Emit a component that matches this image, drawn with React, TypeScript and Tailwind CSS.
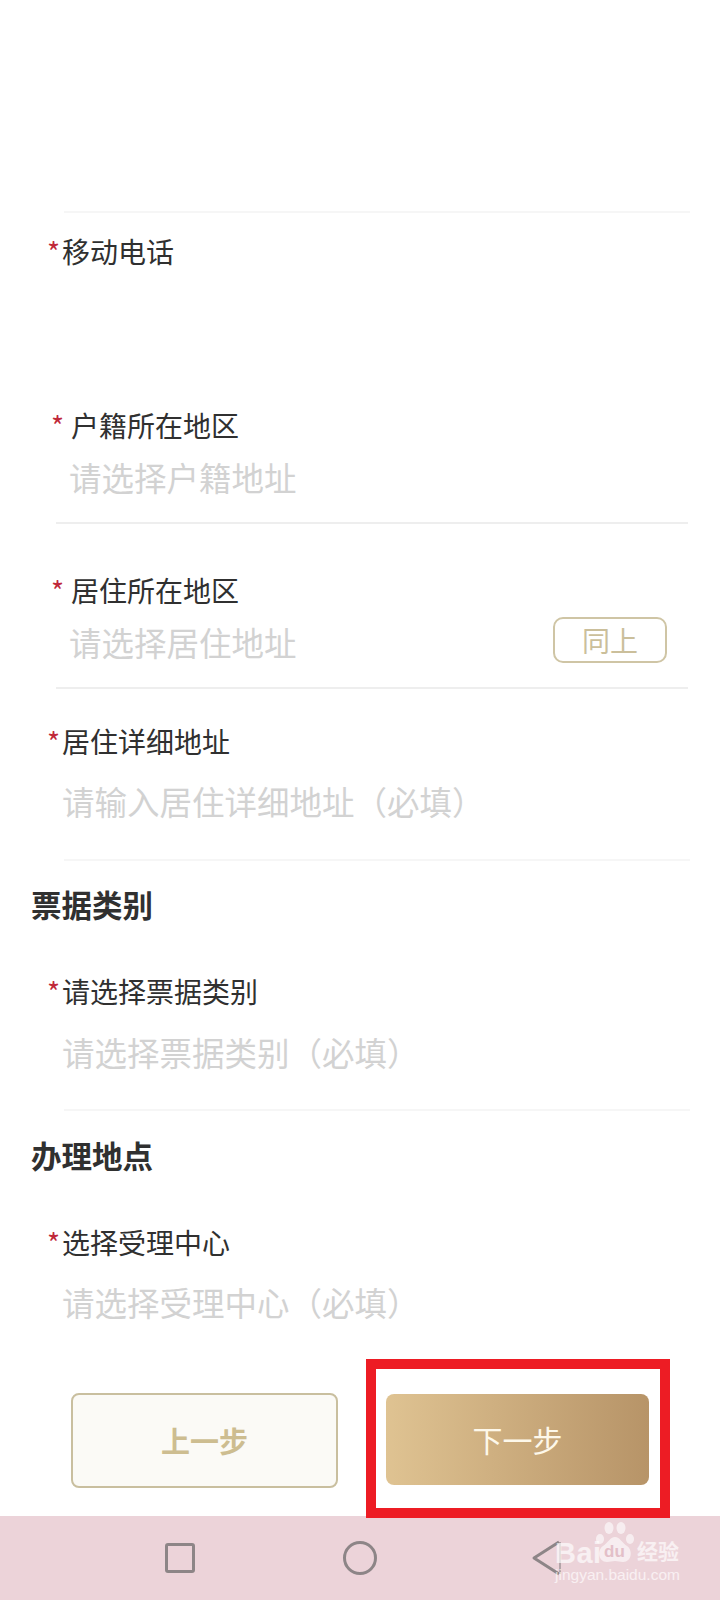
const font = { fontFamily: '"Noto Sans CJK SC", "Liberation Sans", sans-serif' }

type LabelProps = { text: string; spaced?: boolean; className?: string }

const Label = ({ text, spaced, className }: LabelProps) => (
  <div className={"flex items-center h-9 text-[28px] leading-9 text-[#303030] " + (spaced ? "pl-[51px]" : "pl-[47px]") + " " + (className ?? "")}>
    <span className={"text-[28px] text-[#c0283a] " + (spaced ? "w-[20px]" : "w-[15px]")}>*</span>
    <span>{text}</span>
  </div>
)

const Hint = ({ text, className }: { text: string; className?: string }) => (
  <div className={"h-10 text-[32.5px] leading-10 text-[#d2d2d2] whitespace-nowrap " + (className ?? "")}>{text}</div>
)

const Title = ({ text, className }: { text: string; className?: string }) => (
  <div className={"pl-[31px] h-10 text-[30.5px] leading-10 font-bold text-[#303030] " + (className ?? "")}>{text}</div>
)

const Watermark = () => (
  <div className="absolute left-[555px] top-[1522px] w-[128px] text-white/65" style={{ fontFamily: '"Liberation Sans", sans-serif' }}>
    <div className="flex items-end h-[41px]">
      <span className="w-[41px] text-[29px] leading-[20px] font-bold tracking-[0.5px]">Bai</span>
      <div className="relative w-[38px] h-[41px]">
        <svg width="38" height="41" viewBox="0 0 38 41" fill="#ffffff" fillOpacity="0.6">
          <ellipse cx="4" cy="17" rx="4" ry="5" />
          <ellipse cx="13" cy="6" rx="4.5" ry="6" />
          <ellipse cx="25" cy="6" rx="4.5" ry="6" />
          <ellipse cx="34" cy="17" rx="4" ry="5" />
          <path d="M19 15c-5 0-7 6-12 9-6 4-5 16 4 16 3 0 5-1 8-1s5 1 8 1c9 0 10-12 4-16-5-3-7-9-12-9z" />
        </svg>
        <span className="absolute left-[8px] bottom-[3px] text-[17px] leading-none font-bold text-[#e3bfc8]">du</span>
      </div>
      <span className="ml-[3px] text-[21px] leading-[26px] font-bold" style={font}>经验</span>
    </div>
    <div className="mt-[4px] text-[15.5px] leading-none whitespace-nowrap">jingyan.baidu.com</div>
  </div>
)

const App: React.FunctionComponent = () => {
  return (
    <div className="relative w-[720px] h-[1600px] bg-white overflow-hidden" style={font}>
      <div className="h-[211px]" />
      <div className="ml-16 mr-[30px] h-0.5 bg-[#f6f6f6]" />

      <Label text="移动电话" className="mt-[20px]" />
      <Label text="户籍所在地区" spaced className="mt-[138px]" />
      <Hint text="请选择户籍地址" className="mt-[14px] pl-[69px]" />
      <div className="mt-[25px] ml-14 mr-8 h-0.5 bg-[#eeeeee]" />

      <Label text="居住所在地区" spaced className="mt-[48px]" />
      <div className="mt-[9px] flex items-center justify-between pl-[69px] pr-[53px] h-[50px]">
        <Hint text="请选择居住地址" />
        <div className="flex items-center justify-center w-[114px] h-[46px] mb-[4px] rounded-[10px] border-2 border-[#cfc5a5] text-[28px] text-[#cbbf9b]">同上</div>
      </div>
      <div className="mt-[20px] ml-14 mr-8 h-0.5 bg-[#eeeeee]" />

      <Label text="居住详细地址" className="mt-[34px]" />
      <Hint text="请输入居住详细地址（必填）" className="mt-[22px] pl-[62px]" />
      <div className="mt-[38px] ml-16 mr-[30px] h-0.5 bg-[#f6f6f6]" />

      <Title text="票据类别" className="mt-[23px]" />
      <Label text="请选择票据类别" className="mt-[49px]" />
      <Hint text="请选择票据类别（必填）" className="mt-[23px] pl-[62px]" />
      <div className="mt-[37px] ml-16 mr-[30px] h-0.5 bg-[#f6f6f6]" />

      <Title text="办理地点" className="mt-[24px]" />
      <Label text="选择受理中心" className="mt-[49px]" />
      <Hint text="请选择受理中心（必填）" className="mt-[22px] pl-[62px]" />

      <div className="mt-[71px] flex items-start pl-[71px]">
        <button className="w-[267px] h-[95px] rounded-[8px] border-2 border-[#c9bf9f] bg-[#fbfaf6] text-[29px] font-bold text-[#cdbd90]">上一步</button>
        <button className="ml-[48px] mt-[1px] w-[263px] h-[91px] rounded-[8px] bg-gradient-to-r from-[#dfc392] to-[#b79468] text-[30px] text-[#fdf8ea]">下一步</button>
      </div>

      <div className="absolute left-0 right-0 bottom-0 h-[84px] bg-[#ecd3d9] flex items-start pt-[24px]">
        <div className="ml-[165px] mt-[3px] w-[30px] h-[30px] rounded-[3px] border-[3px] border-[#8d8587]" />
        <div className="ml-[148px] mt-[1px] w-[34px] h-[34px] rounded-full border-[3px] border-[#8d8587]" />
        <svg className="ml-[154px]" width="32" height="36" viewBox="0 0 32 36" fill="none" stroke="#8d8587" strokeWidth="3" strokeLinejoin="round">
          <path d="M28 2 3 18l25 16" />
          <path d="M29 2v32" strokeWidth="2" strokeOpacity="0.6" />
        </svg>
      </div>

      {/* annotation drawn over the screenshot */}
      <div className="absolute left-[366px] top-[1359px] w-[304px] h-[159px] border-[10px] border-[#ed1c24]" />

      <Watermark />
    </div>
  )
}

export default App
